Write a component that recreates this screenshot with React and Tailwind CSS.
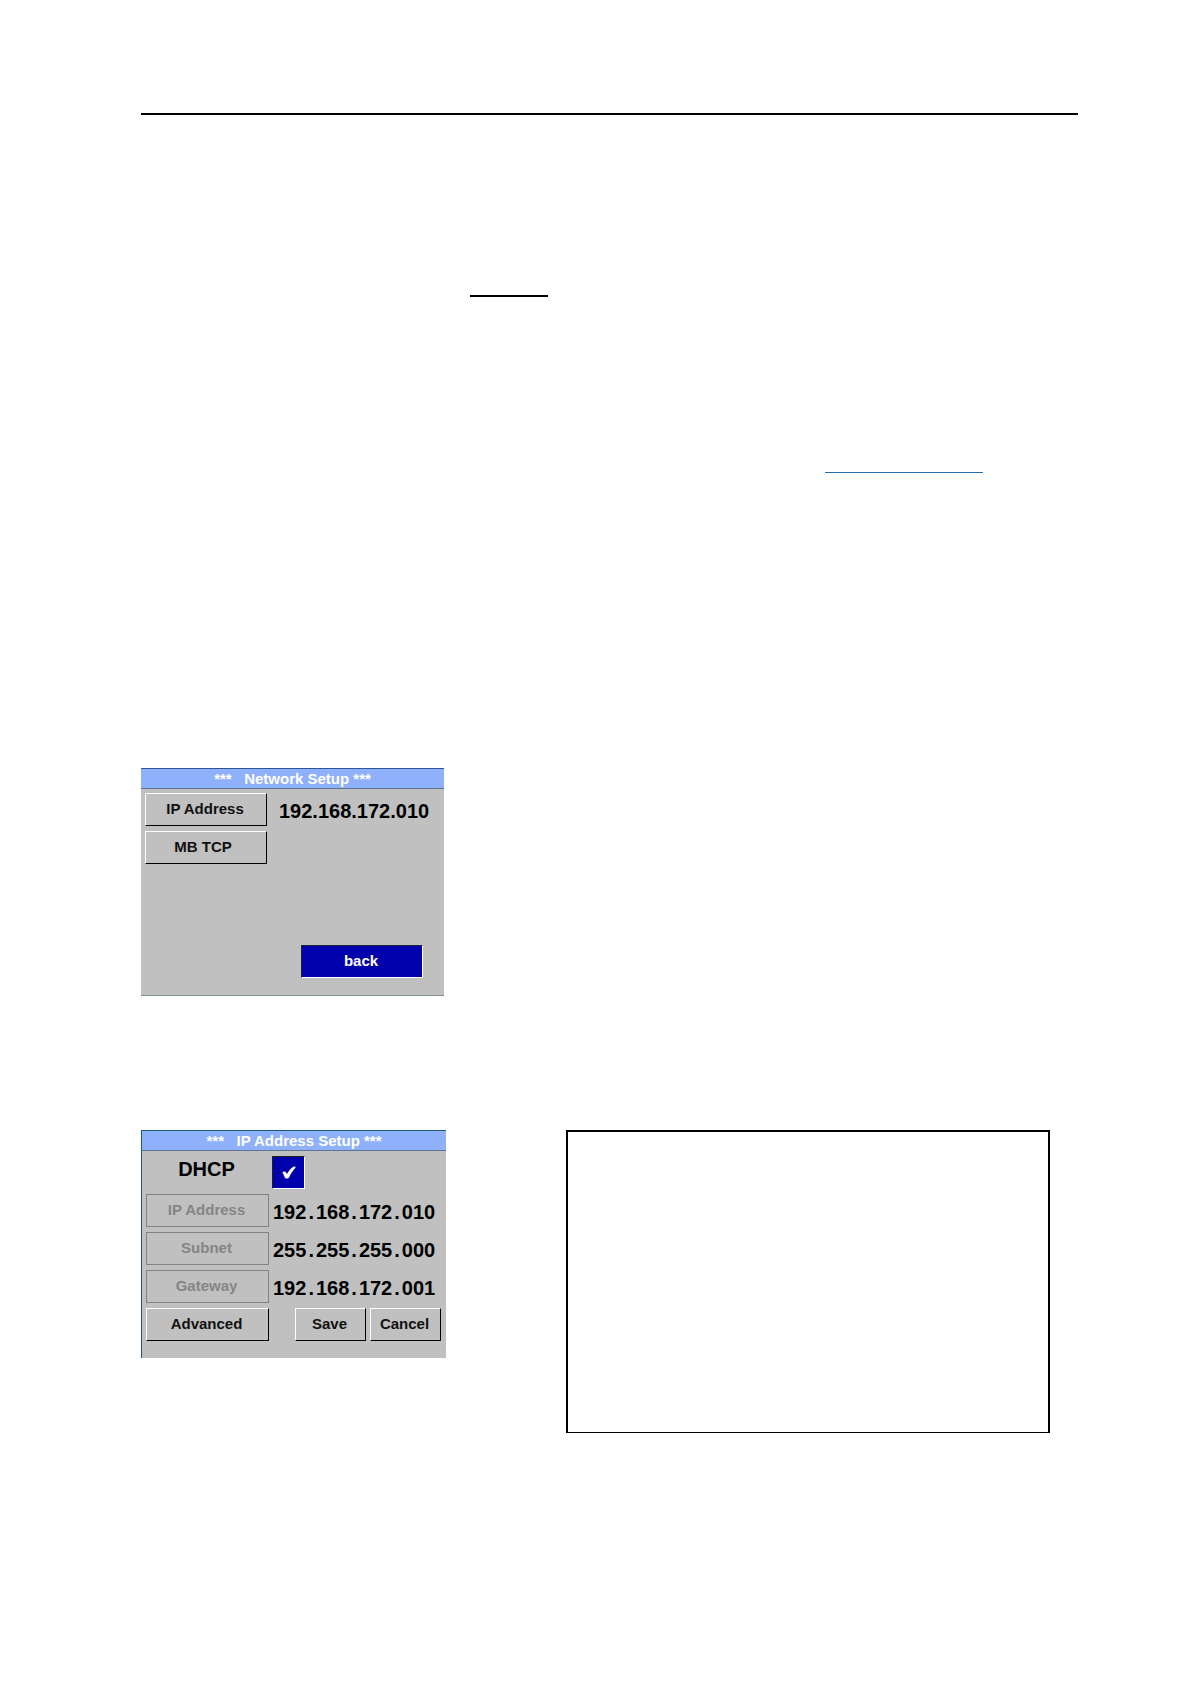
import React, { useState } from 'react';
import clsx from 'clsx';

const ScreenButton = ({ children, className, disabled }) => (
  <button
    type="button"
    disabled={disabled}
    className={clsx(
      'h-[33px] border pb-0.5 text-[15px] leading-5 font-bold',
      disabled
        ? 'border-[#828282] text-[#858585]'
        : 'border-t-white border-l-white border-r-black border-b-black text-[#111111]',
      className
    )}
  >
    {children}
  </button>
);

const ScreenTitle = ({ children }) => (
  <h2 className="h-5 bg-[#8fb0fb] border-b border-[#5f7396] text-center text-[15px] leading-5 font-bold text-white whitespace-pre">
    {`***   ${children} ***`}
  </h2>
);

// Each octet sits in its own field, with the dots between them
const AddressFields = ({ value }) => (
  <span className="flex gap-0.5 pt-0.5 pl-1 text-xl leading-6 font-bold text-black">
    {value.split(/(\.)/).map((part, i) => (
      <span key={i}>{part}</span>
    ))}
  </span>
);

const NetworkSetup = () => (
  <section className="flex w-[303px] h-[228px] flex-col bg-[#c0c0c0] border-t border-t-[#2f5597] border-b border-b-[#829292]">
    <ScreenTitle>Network Setup</ScreenTitle>
    <div className="flex flex-1 flex-col items-start gap-[5px] pt-1 pl-1">
      <div className="flex items-center">
        <ScreenButton className="w-[122px] pr-0.5">IP Address</ScreenButton>
        <span className="pt-0.5 pl-3 text-xl leading-6 font-bold text-black">192.168.172.010</span>
      </div>
      <ScreenButton className="w-[122px] pr-1.5">MB TCP</ScreenButton>
      <button
        type="button"
        className="mt-auto mr-[21px] mb-[17px] h-[33px] w-[122px] self-end border border-t-[#202038] border-l-[#202038] border-r-white border-b-white bg-[#0000ac] pr-0.5 pb-0.5 text-[15px] leading-5 font-bold text-white"
      >
        back
      </button>
    </div>
  </section>
);

const IpAddressSetup = () => {
  const [dhcp, setDhcp] = useState(true);

  const rows = [
    { label: 'IP Address', value: '192.168.172.010' },
    { label: 'Subnet', value: '255.255.255.000' },
    { label: 'Gateway', value: '192.168.172.001' },
  ];

  return (
    <section className="w-[305px] h-[228px] shrink-0 bg-[#c0c0c0] border-t border-l border-[#1c5a78]">
      <ScreenTitle>IP Address Setup</ScreenTitle>
      <div className="flex flex-col gap-[5px] pt-[5px] pl-1">
        <div className="flex items-center gap-[3px]">
          <label htmlFor="dhcp" className="w-[123px] pr-0.5 pb-2 text-center text-xl leading-6 font-bold text-black">
            DHCP
          </label>
          <div className="grid size-[33px] place-items-center">
            <input
              id="dhcp"
              type="checkbox"
              checked={dhcp}
              onChange={(e) => setDhcp(e.target.checked)}
              className="size-[33px] appearance-none border border-t-[#202020] border-l-[#202020] border-r-white border-b-white bg-[#0000ac] [grid-area:1/1]"
            />
            {dhcp && (
              <svg viewBox="0 0 14 13" className="pointer-events-none h-[13px] w-3.5 fill-white [grid-area:1/1]">
                <path d="M0.4 6.6C1.4 5.2 3.4 5.2 4.1 6.6L4.9 8.1C6.8 4.7 9.2 2 11.9 0.5C13 0.1 14 0.8 13.4 1.8C10.8 4.6 8.8 7.7 7.2 11.2C6.5 12.8 3.4 13 2.8 11.6C2.2 9.9 1.4 8.2 0.4 6.6Z" />
              </svg>
            )}
          </div>
        </div>
        {rows.map((row) => (
          <div key={row.label} className="flex items-center">
            <ScreenButton disabled={dhcp} className="w-[123px] pr-0.5">{row.label}</ScreenButton>
            <AddressFields value={row.value} />
          </div>
        ))}
        <div className="flex">
          <ScreenButton className="w-[123px] pr-0.5">Advanced</ScreenButton>
          <ScreenButton className="ml-[26px] w-[71px] pr-0.5">Save</ScreenButton>
          <ScreenButton className="ml-1 w-[71px] pr-0.5">Cancel</ScreenButton>
        </div>
      </div>
    </section>
  );
};

const App = () => (
  <main className="min-h-screen bg-white pt-[113px] pr-[113px] pb-16 pl-[141px] font-['Liberation_Sans',Arial,sans-serif]">
    <div className="h-0.5 bg-black" />
    <div className="mt-[180px] ml-[329px] h-0.5 w-[78px] bg-black" />
    <div className="mt-[175px] ml-[684px] h-px w-[158px] bg-[#1f6fb2]" />

    <div className="mt-[295px]">
      <NetworkSetup />
    </div>

    <div className="mt-[134px] flex items-start">
      <IpAddressSetup />
      <div className="mr-7 ml-[120px] h-[303px] flex-1 border-2 border-b border-black" />
    </div>
  </main>
);

export default App;
